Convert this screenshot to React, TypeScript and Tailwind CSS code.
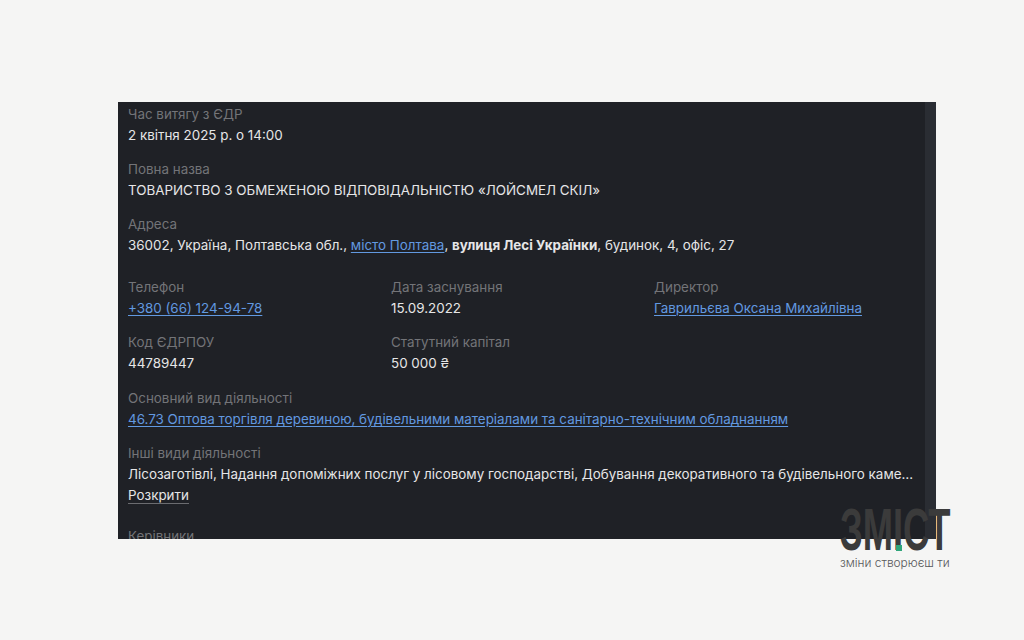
import React from "react";

function Label({ children }: { children: React.ReactNode }) {
  return <div className="text-[13.4px] leading-[21px] text-[#737478]">{children}</div>;
}

function Value({ children }: { children: React.ReactNode }) {
  return <div className="text-[13.4px] leading-[21px] text-[#e6e6e7]">{children}</div>;
}

function A({ children }: { children: React.ReactNode }) {
  return <a className="text-[#6299e0] underline underline-offset-2">{children}</a>;
}

function Field({ label, children }: { label: string; children: React.ReactNode }) {
  return (
    <div className="mb-[13px]">
      <Label>{label}</Label>
      <Value>{children}</Value>
    </div>
  );
}

export default function App() {
  return (
    <div className="relative h-[640px] w-[1024px] overflow-hidden bg-[#f5f5f4] pl-[118px] pt-[102px] font-['Inter',sans-serif]">
      <div className="flex h-[437px] w-[818px] overflow-hidden bg-[#1f2126]">
        <div className="min-w-0 flex-1 pl-[10px] pr-[10px] pt-[2px]">
          <Field label="Час витягу з ЄДР">2 квітня 2025 р. о 14:00</Field>
          <Field label="Повна назва">ТОВАРИСТВО З ОБМЕЖЕНОЮ ВІДПОВІДАЛЬНІСТЮ «ЛОЙСМЕЛ СКІЛ»</Field>
          <div className="mb-[21px]">
            <Label>Адреса</Label>
            <Value>
              36002, Україна, Полтавська обл., <A>місто Полтава</A>, <b className="font-bold">вулиця Лесі Українки</b>, будинок, 4, офіс, 27
            </Value>
          </div>
          <div className="grid grid-cols-[263px_263px_263px]">
            <Field label="Телефон"><A>+380 (66) 124-94-78</A></Field>
            <Field label="Дата заснування">15.09.2022</Field>
            <Field label="Директор"><A>Гаврильєва Оксана Михайлівна</A></Field>
            <Field label="Код ЄДРПОУ">44789447</Field>
            <Field label="Статутний капітал">50 000 ₴</Field>
          </div>
          <div className="pt-[1px]">
            <Field label="Основний вид діяльності">
              <A>46.73 Оптова торгівля деревиною, будівельними матеріалами та санітарно-технічним обладнанням</A>
            </Field>
          </div>
          <div className="mb-[20px]">
            <Label>Інші види діяльності</Label>
            <Value>
              <div className="truncate">Лісозаготівлі, Надання допоміжних послуг у лісовому господарстві, Добування декоративного та будівельного каменю, вапняку</div>
            </Value>
            <div className="text-[13.4px] leading-[21px] text-[#e6e6e7]">
              <span className="border-b border-[#6b6c70]">Розкрити</span>
            </div>
          </div>
          <Label>Керівники</Label>
        </div>
        <div className="w-[11px] shrink-0 bg-[#2a2d33]" />
      </div>

      <div className="absolute left-[840px] top-[509px] w-[112px]">
        <div className="relative h-[44px] overflow-visible">
          <span className="absolute left-0 top-[-14px] origin-top-left scale-x-[0.605] whitespace-nowrap font-['Liberation_Sans',sans-serif] text-[60px] font-bold leading-[70px] text-[#3b3b3b]">
            ЗМІСТ
          </span>
          <span className="absolute left-[56px] top-[36px] h-[6px] w-[6px] bg-[#2fa57a]" />
        </div>
        <div className="mt-[2px] whitespace-nowrap text-[11.9px] font-light leading-[16px] text-[#57585a]">зміни створюєш ти</div>
      </div>
    </div>
  );
}
